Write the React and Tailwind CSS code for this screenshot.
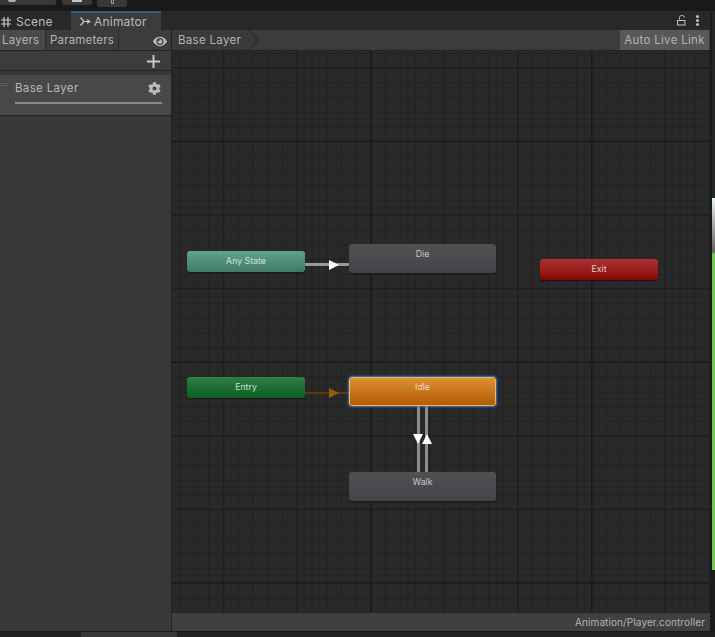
import { FaCog, FaEye } from "react-icons/fa";

const gridClass =
  "bg-[linear-gradient(to_right,#191919_1px,transparent_1px),linear-gradient(to_bottom,#191919_1px,transparent_1px),linear-gradient(to_right,#1d1d1d_1px,transparent_1px),linear-gradient(to_bottom,#1d1d1d_1px,transparent_1px),linear-gradient(to_right,#222222_1px,transparent_1px),linear-gradient(to_bottom,#222222_1px,transparent_1px),linear-gradient(to_right,#252525_1px,transparent_1px),linear-gradient(to_bottom,#252525_1px,transparent_1px)] bg-[size:220.8px_220.8px,220.8px_220.8px,73.6px_73.6px,73.6px_73.6px,14.72px_14.72px,14.72px_14.72px,7.36px_7.36px,7.36px_7.36px] bg-[position:-22px_90px,-22px_90px,51px_16px,51px_16px,7px_2px,7px_2px,0px_2px,0px_2px]";

function StateNode({ label, className, left, top, width, height }) {
  return (
    <div
      className={`absolute flex justify-center rounded-[3px] text-[8.75px] ${className}`}
      style={{ left, top, width, height }}
    >
      {label}
    </div>
  );
}

function HashIcon() {
  return (
    <svg width="10" height="10" viewBox="0 0 10 10" stroke="#cccccc" strokeWidth="1.2" fill="none">
      <path d="M3 0V10M7 0V10M0 3H10M0 7H10" />
    </svg>
  );
}

function AnimatorIcon() {
  return (
    <svg width="11" height="10" viewBox="0 0 11 10" stroke="#c8c8c8" strokeWidth="1.2" fill="none">
      <path d="M0.5 0.5L4 4.5L0.5 8.5M4 4.5H8" />
      <path d="M7.5 2.5L10.5 4.5L7.5 6.5Z" fill="#c8c8c8" strokeWidth="0.5" />
    </svg>
  );
}

function LockIcon() {
  return (
    <svg width="9" height="11" viewBox="0 0 9 11" fill="none" stroke="#c4c4c4" strokeWidth="1">
      <path d="M2.5 4.5V2.5C2.5 1.2 3.4 0.5 4.8 0.5C6.2 0.5 7.5 1.2 7.5 2.5" />
      <rect x="0.5" y="5.5" width="7.5" height="4.5" />
    </svg>
  );
}

// transition line, the heads sit on top as css triangles
function Line({ left, top, width, height, color }) {
  return <div className="absolute" style={{ left, top, width, height, background: color }} />;
}

export default function App() {
  return (
    <div className="relative flex h-[637px] w-[715px] flex-col overflow-hidden bg-[#1b1b1b] font-['Inter','Noto_Sans',sans-serif]">
      {/* top toolbar leftovers */}
      <div className="flex h-[11px] shrink-0 gap-[5px] bg-[#191919]">
        <div className="flex h-[5px] w-[56px] justify-start rounded-b-[2px] bg-[#383838] pl-[8px]">
          <div className="h-[2px] w-[8px] rounded-b-full bg-[#b0b0b0]" />
        </div>
        <div className="ml-px flex h-[5px] w-[30px] items-start justify-center rounded-b-[2px] bg-[#383838]">
          <div className="h-[2px] w-[10px] bg-[#c4c4c4]" />
        </div>
        <div className="flex h-[7px] w-[30px] justify-center rounded-b-[3px] bg-[#383838]">
          <div className="h-[4px] w-[3px] rounded-b-full border-x border-b border-[#a0a0a0]" />
        </div>
      </div>

      <div className="flex h-[620px] w-[710px] shrink-0 flex-col">
        {/* tabs */}
        <div className="flex h-[19px] shrink-0 items-stretch bg-[#282828] text-[12px] leading-none text-[#bdbdbd]">
          <div className="flex w-[71px] items-center gap-[5px] pl-px pt-[2px]">
            <HashIcon />
            <span className="tracking-[0.2px]">Scene</span>
          </div>
          <div className="flex w-[90px] items-center gap-[3px] border-t-2 border-[#2c5d87] bg-[#3c3c3c] pl-[9px] pt-px">
            <AnimatorIcon />
            <span className="tracking-[0.2px]">Animator</span>
          </div>
          <div className="ml-auto flex items-center gap-[10px] pr-[11px]">
            <LockIcon />
            <div className="flex flex-col gap-[1px]">
              <div className="h-[3px] w-[3px] rounded-full bg-[#c4c4c4]" />
              <div className="h-[3px] w-[3px] rounded-full bg-[#c4c4c4]" />
              <div className="h-[3px] w-[3px] rounded-full bg-[#c4c4c4]" />
            </div>
          </div>
        </div>

        {/* toolbar */}
        <div className="flex h-[21px] shrink-0 border-b border-[#232323] bg-[#3c3c3c] text-[11.5px] leading-none text-[#b4b4b4]">
          <div className="flex w-[172px] shrink-0 items-stretch border-r border-[#232323]">
            <div className="flex w-[46px] items-center border-r border-[#2a2a2a] bg-[#4a4a4a] pl-[2px] pt-[2px] tracking-[0.2px]">
              Layers
            </div>
            <div className="flex w-[73px] items-center justify-center border-r border-[#2a2a2a] pt-[2px] tracking-[0.2px]">
              Parameters
            </div>
            <div className="flex flex-1 items-center justify-end pr-[4px] pt-[2px]">
              <FaEye className="h-[13px] w-[14px] text-[#b8b8b8]" />
            </div>
          </div>
          <div className="flex flex-1 items-stretch justify-between">
            <div className="relative flex w-[79px] items-center bg-[#3a3a3a] pl-[6px] pt-[2px] tracking-[0.3px]">
              Base Layer
              <svg
                className="absolute left-[77px] top-0"
                width="10"
                height="20"
                viewBox="0 0 10 20"
                fill="#3a3a3a"
                stroke="#232323"
              >
                <path d="M0 0L9 10L0 20" />
              </svg>
            </div>
            <div className="mr-px flex w-[89px] items-center justify-center bg-[#585858] pt-[2px] tracking-[0.3px]">
              Auto Live Link
            </div>
          </div>
        </div>

        {/* main */}
        <div className="flex min-h-0 flex-1">
          {/* layers panel */}
          <div className="flex w-[172px] shrink-0 flex-col border-r border-[#232323] bg-[#383838]">
            <div className="flex h-[20px] shrink-0 items-center justify-end border-b border-[#232323] bg-[#3c3c3c] pr-[11px] pt-px">
              <svg width="13" height="13" viewBox="0 0 13 13" fill="#c8c8c8">
                <path d="M5.5 0H7.5V5.5H13V7.5H7.5V13H5.5V7.5H0V5.5H5.5Z" />
              </svg>
            </div>
            <div className="mt-[4px] h-[41px] shrink-0 border-b border-[#232323] bg-[#484848] pl-[15px] pr-[9px]">
              <div className="relative flex h-[27px] items-center justify-between text-[11.5px] leading-none tracking-[0.35px] text-[#b8b8b8]">
                Base Layer
                <FaCog className="mr-px h-[13px] w-[13px] text-[#bcbcbc]" />
                <div className="absolute -left-[15px] top-[8px] h-[3px] w-[8px] border-y border-[#5a5a5a]" />
              </div>
              <div className="h-[2px] bg-[#8a8a8a]" />
            </div>
          </div>

          {/* graph */}
          <div className="flex min-w-0 flex-1 flex-col">
            <div className={`relative min-h-0 flex-1 bg-[#292929] ${gridClass}`}>
              <Line left={133} top={212} width={45} height={3} color="#9a9a9a" />
              <div className="absolute left-[157px] top-[209px] h-0 w-0 border-y-[5px] border-l-[10px] border-y-transparent border-l-white" />

              <Line left={133} top={341} width={45} height={2} color="#5c3a10" />
              <div className="absolute left-[157px] top-[337px] h-0 w-0 border-y-[5px] border-l-[10px] border-y-transparent border-l-[#8f5c0e]" />

              <Line left={245} top={355} width={3} height={67} color="#8c8c8c" />
              <Line left={253} top={355} width={3} height={67} color="#8c8c8c" />
              <div className="absolute left-[241px] top-[383px] h-0 w-0 border-x-[5px] border-t-[10px] border-x-transparent border-t-white" />
              <div className="absolute left-[250px] top-[383px] h-0 w-0 border-x-[5px] border-b-[10px] border-x-transparent border-b-white" />

              <StateNode
                label="Any State"
                left={15}
                top={200}
                width={118}
                height={21}
                className="items-center bg-gradient-to-b from-[#5fa48c] to-[#3f7a68] pt-px text-[#d4e0dc] shadow-[0_1px_1px_#181818]"
              />
              <StateNode
                label="Die"
                left={177}
                top={193}
                width={147}
                height={29}
                className="bg-gradient-to-b from-[#4e5052] to-[#434548] pt-[5px] leading-[11px] text-[#c8c8c8] shadow-[0_1px_1px_#181818]"
              />
              <StateNode
                label="Exit"
                left={368}
                top={208}
                width={118}
                height={21}
                className="items-center bg-gradient-to-b from-[#a83232] to-[#8a0000] pt-px text-[#e6cccc] shadow-[0_1px_1px_#181818]"
              />
              <StateNode
                label="Entry"
                left={15}
                top={326}
                width={118}
                height={21}
                className="items-center bg-gradient-to-b from-[#2f8045] to-[#0b5e22] pt-px text-[#cfe0d4] shadow-[0_1px_1px_#181818]"
              />
              <StateNode
                label="Idle"
                left={177}
                top={326}
                width={147}
                height={29}
                className="border border-[#e8b878] bg-gradient-to-b from-[#dc912e] to-[#b45a04] pt-[4px] leading-[11px] text-[#ecd9c0] shadow-[0_0_2px_1px_#2f7fc4]"
              />
              <StateNode
                label="Walk"
                left={177}
                top={421}
                width={147}
                height={29}
                className="bg-gradient-to-b from-[#4e5052] to-[#434548] pt-[5px] leading-[11px] text-[#c8c8c8] shadow-[0_1px_1px_#181818]"
              />
            </div>

            {/* status bar */}
            <div className="flex h-[18px] shrink-0 items-center justify-end bg-[#404040] pr-[5px] text-[10px] leading-none tracking-[0.1px] text-[#b4b4b4]">
              Animation/Player.controller
            </div>
          </div>
        </div>
      </div>

      {/* bottom edge */}
      <div className="flex-1 border-t border-[#191919] bg-[#222222]">
        <div className="ml-[81px] h-full w-[96px] bg-[#383838]" />
      </div>

      {/* neighbouring panel at the right edge */}
      <div className="absolute right-0 top-[11px] h-[187px] w-[3px] bg-[#262626]" />
      <div className="absolute right-0 top-[198px] h-[372px] w-[3px] bg-[linear-gradient(to_bottom,#e8f4f4_0px,#a0a0a0_30px,#6a6060_54px,#71c84e_56px,#71c84e_372px)]" />
    </div>
  );
}
